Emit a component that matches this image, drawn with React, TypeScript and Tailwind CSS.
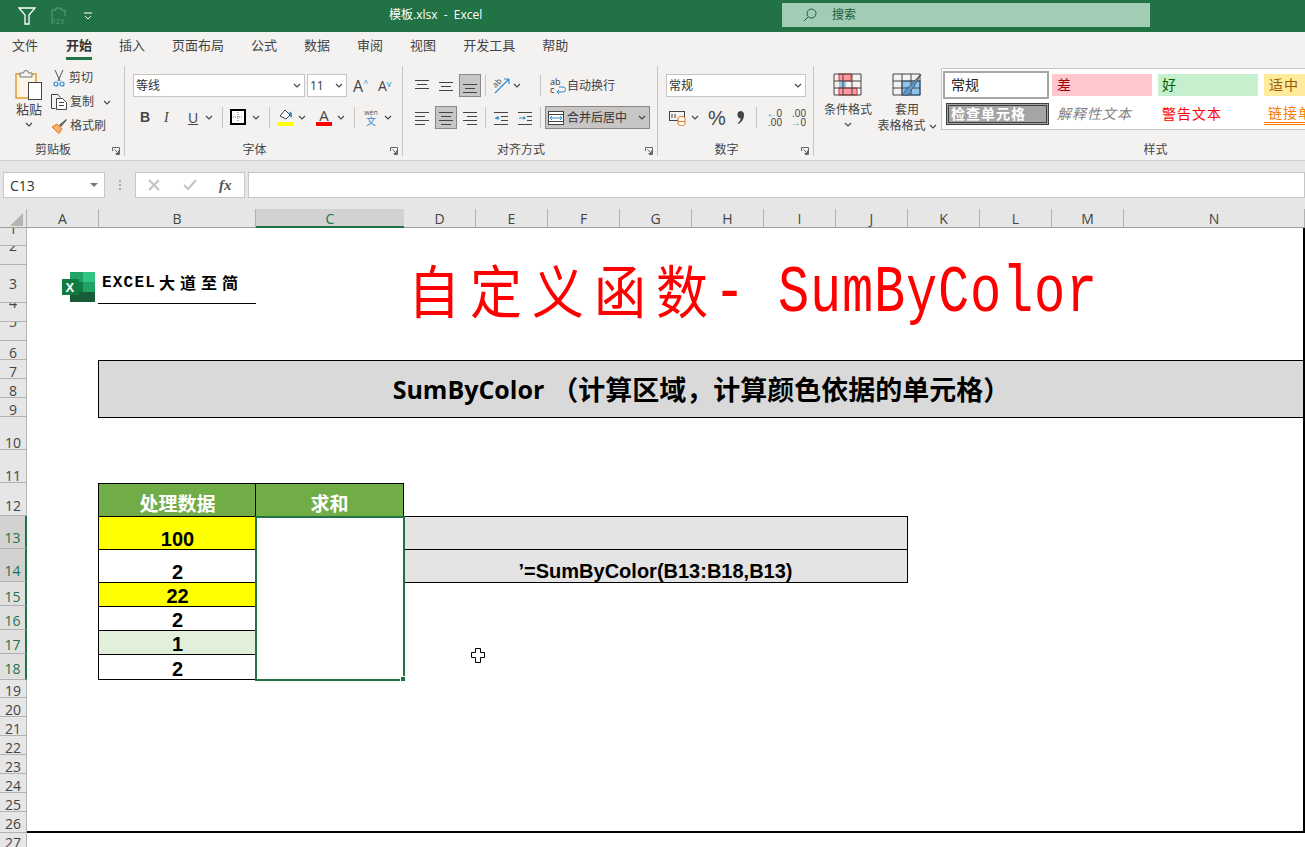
import type { ReactNode } from "react";

function Chevron({ className = "" }: { className?: string }) {
  return (
    <svg width="8" height="5" viewBox="0 0 8 5" className={className}>
      <path d="M1 1l3 3 3-3" fill="none" stroke="#444" strokeWidth="1.1" />
    </svg>
  );
}

function Launcher() {
  return (
    <svg width="8" height="8" viewBox="0 0 8 8" className="absolute right-[4px] bottom-[1px]">
      <path d="M.5 4V.5H7.5V7.5H4M2.5 2.5l4 4M6.5 3.5v3h-3" fill="none" stroke="#666" />
    </svg>
  );
}

function Lines({ rows, arrow }: { rows: number[][]; arrow?: "left" | "right" }) {
  return (
    <svg width="16" height="14" viewBox="0 0 16 14">
      {rows.map(([a, b, y]) => (
        <path key={y} d={`M${a} ${y + 0.5}H${b}`} stroke="#444" />
      ))}
      {arrow === "left" && <path d="M5.5 5v4L1.5 7zM2 6.5h4.5v1H2z" fill="#2a8dd4" />}
      {arrow === "right" && <path d="M2 6.5h4.5V5L9 7 6.5 9V7.5H2z" fill="#2a8dd4" />}
    </svg>
  );
}

function ToolBtn({ children, active = false }: { children: ReactNode; active?: boolean }) {
  return (
    <div
      className={
        active
          ? "mx-px flex h-[23px] w-[22px] items-center justify-center border border-[#8a8886] bg-[#c8c6c4]"
          : "mx-px flex h-[23px] w-[22px] items-center justify-center"
      }
    >
      {children}
    </div>
  );
}

function Sep({ className = "" }: { className?: string }) {
  return <div className={`h-[21px] w-px bg-[#c8c6c4] ${className}`} />;
}

function RibbonGroup({ label, className, children }: { label: string; className: string; children: ReactNode }) {
  return (
    <div className={`relative flex h-[90px] shrink-0 flex-col border-r border-[#c8c6c4] ${className}`}>
      {children}
      <div className="mt-auto -mb-[2px] pr-[18px] text-center text-[12px] leading-[16px] text-[#444]">{label}</div>
      <Launcher />
    </div>
  );
}

function Select({ text, className }: { text: string; className: string }) {
  return (
    <div className={`flex h-[23px] items-center justify-between border border-[#c6c6c6] bg-white pr-[3px] pl-[2px] text-[12px] text-[#333] ${className}`}>
      <span>{text}</span>
      <Chevron />
    </div>
  );
}

function TitleBar() {
  return (
    <div className="flex h-[32px] items-center bg-[#217346] text-white">
      <svg width="18" height="18" viewBox="0 0 18 18" className="ml-[18px]">
        <path d="M1 1h16l-6 7v9H7V8z" fill="none" stroke="#fff" strokeWidth="1.3" />
      </svg>
      <svg width="16" height="18" viewBox="0 0 16 18" className="ml-[15px] overflow-visible">
        <path d="M1 3h4V1h5v2h4v6M1 3v14" fill="none" stroke="#5f9f7d" />
        <text x="1" y="17" fontSize="7" fill="#5f9f7d">123</text>
      </svg>
      <svg width="8" height="8" viewBox="0 0 8 8" className="ml-[17px]">
        <path d="M0 1h8M1 4l3 3 3-3" fill="none" stroke="#fff" />
      </svg>
      <div className="ml-[297px] w-[100px] -translate-y-[1px] text-[12px] whitespace-pre">模板.xlsx  -  Excel</div>
      <div className="ml-[293px] flex h-[24px] w-[368px] -translate-y-[1px] items-center bg-[#a0cdb3] pl-[20px] text-[12px] text-[#1d5c3a]">
        <svg width="16" height="16" viewBox="0 0 16 16">
          <circle cx="9.5" cy="6.5" r="4.5" fill="none" stroke="#1d5c3a" />
          <path d="M6 10l-4 4" stroke="#1d5c3a" />
        </svg>
        <span className="ml-[14px]">搜索</span>
      </div>
    </div>
  );
}

function Tabs() {
  const tabs = ["文件", "开始", "插入", "页面布局", "公式", "数据", "审阅", "视图", "开发工具", "帮助"];
  return (
    <div className="flex h-[30px] gap-[27px] bg-[#f3f2f1] pl-[12px] text-[13px] text-[#444]">
      {tabs.map((t) => (
        <div
          key={t}
          className={
            t === "开始"
              ? "flex h-[28px] items-center border-b-[3px] border-[#217346] pt-[3px] font-bold text-[#333]"
              : t === "文件"
                ? "mr-px flex h-[28px] items-center"
                : "flex h-[28px] items-center"
          }
        >
          {t}
        </div>
      ))}
    </div>
  );
}

function ClipboardGroup() {
  return (
    <RibbonGroup label="剪贴板" className="w-[125px]">
      <div className="flex">
        <div className="ml-[14px] flex w-[30px] flex-col items-center pt-[3px]">
          <svg width="28" height="31" viewBox="0 0 28 31">
            <rect x="1" y="5" width="20" height="24" fill="#fdf6e8" stroke="#e69a2e" strokeWidth="1.5" />
            <path d="M5 8V4h3.5a2.5 2.5 0 0 1 5 0H17v4z" fill="#f3f2f1" stroke="#777" />
            <rect x="13.5" y="13.5" width="13" height="17" fill="#fff" stroke="#444" />
          </svg>
          <div className="mt-[1px] text-[13px] leading-[16px] whitespace-nowrap text-[#444]">粘贴</div>
          <Chevron className="mt-[5px]" />
        </div>
        <div className="ml-[7px] flex flex-col text-[12px] text-[#444]">
          <div className="flex h-[24px] items-center">
            <svg width="12" height="17" viewBox="0 0 12 17" className="ml-[2px]">
              <path d="M2 0l5 11M10 0L5 11" stroke="#555" />
              <circle cx="3" cy="14" r="2" fill="none" stroke="#2a8dd4" strokeWidth="1.2" />
              <circle cx="9" cy="14" r="2" fill="none" stroke="#2a8dd4" strokeWidth="1.2" />
            </svg>
            <span className="ml-[4px]">剪切</span>
          </div>
          <div className="flex h-[24px] items-center">
            <svg width="17" height="16" viewBox="0 0 17 16">
              <path d="M4.5 14.5h-4V.5H7l2.5 3" fill="none" stroke="#444" />
              <path d="M5.5 4.5h6l4 4v7h-10zM8 8.5h5M8 11.5h5" fill="#fff" stroke="#444" />
            </svg>
            <span className="ml-[2px]">复制</span>
            <Chevron className="ml-[9px]" />
          </div>
          <div className="flex h-[24px] items-center">
            <svg width="17" height="16" viewBox="0 0 17 16">
              <path d="M1 9l5-3 5 5-3 4.500z" fill="#f7b267" stroke="#e0791d" />
              <path d="M8 7l7-6 1 1-6 7z" fill="#666" />
            </svg>
            <span className="ml-[2px]">格式刷</span>
          </div>
        </div>
      </div>
    </RibbonGroup>
  );
}

function FontGroup() {
  return (
    <RibbonGroup label="字体" className="w-[278px] pt-[8px]">
      <div className="flex items-center pl-[8px]">
        <Select text="等线" className="w-[172px]" />
        <Select text="11" className="ml-[2px] w-[40px]" />
        <div className="ml-[6px] flex w-[25px] items-start text-[16px] leading-none text-[#444]">
          A<span className="text-[9px] text-[#2a8dd4]">^</span>
        </div>
        <div className="flex w-[20px] items-start text-[14px] leading-none text-[#444]">
          A<span className="text-[9px] text-[#2a8dd4]">v</span>
        </div>
      </div>
      <div className="mt-[8px] flex h-[24px] items-center text-[14px] text-[#444]">
        <span className="ml-[15px] w-[24px] font-['Liberation_Sans'] font-bold">B</span>
        <span className="w-[24px] font-['Liberation_Serif'] italic">I</span>
        <span className="w-[17px] underline">U</span>
        <Chevron />
        <Sep className="ml-[9px]" />
        <svg width="16" height="16" viewBox="0 0 16 16" className="ml-[7px]">
          <rect x="1" y="1" width="14" height="14" fill="#fff" stroke="#000" strokeWidth="2" />
          <path d="M8 3v10M3 8h10" stroke="#777" strokeDasharray="1 1" />
        </svg>
        <Chevron className="ml-[6px]" />
        <Sep className="ml-[9px]" />
        <div className="ml-[7px] flex w-[16px] flex-col items-center">
          <svg width="14" height="12" viewBox="0 0 14 12">
            <path d="M2 7l5-6 5 5-4 4z" fill="#fff" stroke="#444" />
            <path d="M12 3c1 2 1.500 3 1 5" fill="none" stroke="#2a8dd4" strokeWidth="2" />
          </svg>
          <div className="mt-[1px] h-[4px] w-[16px] bg-[#ffff00]" />
        </div>
        <Chevron className="ml-[5px]" />
        <div className="ml-[10px] flex w-[16px] flex-col items-center">
          <span className="text-[15px] leading-[12px] text-[#444]">A</span>
          <div className="mt-[1px] h-[4px] w-[16px] bg-[#ff0000]" />
        </div>
        <Chevron className="ml-[5px]" />
        <Sep className="ml-[9px]" />
        <div className="ml-[8px] flex w-[16px] flex-col items-center leading-none">
          <span className="text-[7px] text-[#555]">wén</span>
          <span className="text-[10px] text-[#2a8dd4]">文</span>
        </div>
        <Chevron className="ml-[5px]" />
      </div>
    </RibbonGroup>
  );
}

function AlignGroup() {
  return (
    <RibbonGroup label="对齐方式" className="w-[255px] pt-[8px]">
      <div className="flex items-center pl-[7px]">
        <ToolBtn><Lines rows={[[1, 15, 1], [3, 13, 5], [1, 15, 9]]} /></ToolBtn>
        <ToolBtn><Lines rows={[[1, 15, 3], [3, 13, 7], [1, 15, 11]]} /></ToolBtn>
        <ToolBtn active><Lines rows={[[1, 15, 5], [3, 13, 9], [1, 15, 13]]} /></ToolBtn>
        <Sep className="ml-[3px]" />
        <svg width="18" height="17" viewBox="0 0 18 17" className="ml-[7px] overflow-visible">
          <path d="M2 16L16 2M16 2h-5M16 2v5" fill="none" stroke="#2a8dd4" strokeWidth="1.2" />
          <text x="0" y="9" fontSize="8" fill="#444" transform="rotate(-45 4 7)">ab</text>
        </svg>
        <Chevron className="ml-[2px]" />
        <Sep className="ml-[19px]" />
        <div className="ml-[9px] flex items-center text-[12px] text-[#444]">
          <svg width="16" height="17" viewBox="0 0 16 17" className="overflow-visible">
            <text x="0" y="8" fontSize="9" fill="#333">ab</text>
            <text x="0" y="16" fontSize="9" fill="#333">c</text>
            <path d="M9 10h4a2 2 0 0 1 0 5H7M9 13l-2 2 2 2" fill="none" stroke="#2a8dd4" />
          </svg>
          <span className="ml-[1px]">自动换行</span>
        </div>
      </div>
      <div className="mt-[9px] flex items-center pl-[7px]">
        <ToolBtn><Lines rows={[[1, 15, 1], [1, 11, 5], [1, 15, 9], [1, 11, 13]]} /></ToolBtn>
        <ToolBtn active><Lines rows={[[1, 15, 1], [3, 13, 5], [1, 15, 9], [3, 13, 13]]} /></ToolBtn>
        <ToolBtn><Lines rows={[[1, 15, 1], [5, 15, 5], [1, 15, 9], [5, 15, 13]]} /></ToolBtn>
        <Sep className="ml-[3px]" />
        <div className="ml-[3px] flex">
          <ToolBtn><Lines arrow="left" rows={[[1, 15, 1], [8, 15, 5], [8, 15, 9], [1, 15, 13]]} /></ToolBtn>
          <ToolBtn><Lines arrow="right" rows={[[1, 15, 1], [10, 15, 5], [10, 15, 9], [1, 15, 13]]} /></ToolBtn>
        </div>
        <Sep className="ml-[3px]" />
        <div className="ml-[4px] flex h-[23px] w-[105px] items-center border border-[#8a8886] bg-[#c8c6c4] pl-[2px] text-[12px] text-[#333]">
          <svg width="16" height="14" viewBox="0 0 16 14">
            <rect x=".5" y=".5" width="15" height="13" fill="#fff" stroke="#444" />
            <path d="M.5 3.500h15M.5 10.500h15" stroke="#444" />
            <path d="M2 7h12M4 5L2 7l2 2M12 5l2 2-2 2" fill="none" stroke="#2a8dd4" />
          </svg>
          <span className="ml-[3px]">合并后居中</span>
          <Chevron className="ml-[11px]" />
        </div>
      </div>
    </RibbonGroup>
  );
}

function NumberGroup() {
  return (
    <RibbonGroup label="数字" className="w-[156px] pt-[8px]">
      <div className="pl-[8px]">
        <Select text="常规" className="w-[140px]" />
      </div>
      <div className="mt-[9px] flex h-[23px] items-center text-[#444]">
        <svg width="17" height="16" viewBox="0 0 17 16" className="ml-[11px]">
          <rect x=".5" y="1.500" width="15" height="9" fill="none" stroke="#444" />
          <path d="M3 4v4M6 4v4" stroke="#444" />
          <ellipse cx="12.500" cy="8" rx="3.500" ry="1.500" fill="#fff" stroke="#e0791d" />
          <path d="M9 8v6c0 2 7 2 7 0V8M9 11.500h7" fill="#fff" stroke="#e0791d" />
        </svg>
        <Chevron className="ml-[5px]" />
        <span className="ml-[9px] w-[23px] font-['Liberation_Sans'] text-[20px] leading-none">%</span>
        <svg width="8" height="14" viewBox="0 0 8 14" className="ml-[6px]">
          <path d="M3.500 0a3.500 3.500 0 0 1 3.500 4c0 4-2 7-5.500 9l-.8-1c2-1.500 3-3 3-4.500a3.500 3.500 0 0 1-3.200-4A3.500 3.500 0 0 1 3.500 0z" fill="#444" />
        </svg>
        <Sep className="ml-[11px]" />
        <div className="ml-[7px] flex w-[18px] flex-col font-['Liberation_Sans'] text-[10px] leading-[9px] whitespace-nowrap">
          <span className="text-right"><span className="text-[#2a8dd4]">←</span>0</span>
          <span className="text-right">.00</span>
        </div>
        <div className="ml-[6px] flex w-[18px] flex-col font-['Liberation_Sans'] text-[10px] leading-[9px] whitespace-nowrap">
          <span className="text-right">.00</span>
          <span className="text-right"><span className="text-[#2a8dd4]">→</span>0</span>
        </div>
      </div>
    </RibbonGroup>
  );
}

function GridIcon({ variant }: { variant: "cond" | "table" }) {
  return (
    <svg width="30" height="24" viewBox="0 0 30 24">
      {variant === "cond" ? (
        <>
          <rect x="6" y="1" width="12" height="7" fill="#ff9aa2" stroke="#d13438" />
          <rect x="6" y="8" width="7" height="7" fill="#8cc4ec" />
          <rect x="6" y="15" width="18" height="7" fill="#ff9aa2" stroke="#d13438" />
        </>
      ) : (
        <rect x="10" y="8" width="18" height="14" fill="#8cc4ec" stroke="#1a75bc" />
      )}
      <path d="M1 1h27v21H1zM1 8h27M1 15h27M10 1v21M19 1v21" fill="none" stroke="#444" />
      {variant === "table" && (
        <path d="M29 1L18 13l-2 2c-3 1-3 5-6 7 5 1 9-1 9-5l2-2z" fill="#5b9bd5" stroke="#555" />
      )}
    </svg>
  );
}

function StylesGroup() {
  return (
    <RibbonGroup label="样式" className="w-[702px]">
      <div className="flex">
        <div className="ml-[9px] flex w-[50px] flex-col items-center pt-[7px] text-[12px] leading-[16px] text-[#444]">
          <GridIcon variant="cond" />
          <span className="mt-[5px] whitespace-nowrap">条件格式</span>
          <Chevron className="mt-[4px]" />
        </div>
        <div className="ml-[3px] flex w-[62px] flex-col items-center pt-[7px] text-[12px] leading-[16px] text-[#444]">
          <GridIcon variant="table" />
          <span className="mt-[5px]">套用</span>
          <span className="flex items-center gap-[3px] whitespace-nowrap">表格格式<Chevron /></span>
        </div>
        <div className="mt-[2px] ml-[3px] grid h-[62px] w-[500px] grid-cols-[109px_106px_106px_106px] grid-rows-[31px_27px] items-center border border-[#c8c6c4] bg-white pl-[1px] text-[14px]">
          <div className="mr-[3px] flex h-[28px] items-center border-2 border-[#a6a6a6] bg-white pl-[6px] text-[#222]">常规</div>
          <div className="mr-[6px] flex h-[22px] items-center bg-[#ffc7ce] pl-[5px] text-[#9c0006]">差</div>
          <div className="mr-[6px] flex h-[22px] items-center bg-[#c6efce] pl-[4px] text-[#006100]">好</div>
          <div className="mr-[6px] flex h-[22px] items-center bg-[#ffeb9c] pl-[5px] tracking-[1px] text-[#9c5700]">适中</div>
          <div className="mx-[3px] flex h-[22px] items-center border-[3px] border-double border-[#3f3f3f] bg-[#a5a5a5] pl-[2px] tracking-[1px] font-bold whitespace-nowrap text-white">检查单元格</div>
          <div className="flex h-[22px] items-center pl-[5px] tracking-[1px] whitespace-nowrap text-[#7f7f7f] italic">解释性文本</div>
          <div className="flex h-[22px] items-center pl-[4px] tracking-[1px] whitespace-nowrap text-[#ff0000]">警告文本</div>
          <div className="flex h-[22px] items-center border-b-[3px] border-double border-[#fa7d00] pl-[4px] tracking-[1px] whitespace-nowrap text-[#fa7d00]">链接单元格</div>
        </div>
      </div>
    </RibbonGroup>
  );
}

function FormulaBar() {
  return (
    <div className="flex h-[49px] items-start border-t border-[#d2d0ce] bg-[#e6e6e6] pt-[11px]">
      <div className="ml-[3px] flex h-[26px] w-[102px] items-center justify-between border border-[#c6c6c6] bg-white pr-[6px] pl-[6px] text-[14px] text-[#333]">
        C13
        <div className="h-0 w-0 border-x-[4px] border-t-[4px] border-x-transparent border-t-[#777]" />
      </div>
      <div className="ml-[14px] flex h-[26px] flex-col items-center justify-center gap-[2px]">
        <div className="h-[2px] w-[2px] bg-[#aaa]" />
        <div className="h-[2px] w-[2px] bg-[#aaa]" />
        <div className="h-[2px] w-[2px] bg-[#aaa]" />
      </div>
      <div className="ml-[14px] flex h-[26px] w-[110px] items-center border border-[#c6c6c6] bg-white">
        <svg width="12" height="12" viewBox="0 0 12 12" className="ml-[12px]">
          <path d="M1 1l10 10M11 1L1 11" stroke="#c4c4c4" strokeWidth="2" />
        </svg>
        <svg width="14" height="12" viewBox="0 0 14 12" className="ml-[23px]">
          <path d="M1 6l4 4 8-9" fill="none" stroke="#c4c4c4" strokeWidth="2" />
        </svg>
        <span className="ml-[22px] font-['Liberation_Serif'] text-[15px] font-bold text-[#555] italic">fx</span>
      </div>
      <div className="ml-[3px] h-[26px] flex-1 border border-[#c6c6c6] bg-white" />
    </div>
  );
}

const columns = [
  { name: "A", width: "w-[72px]" },
  { name: "B", width: "w-[157px]" },
  { name: "C", width: "w-[148px]" },
  { name: "D", width: "w-[72px]" },
  { name: "E", width: "w-[72px]" },
  { name: "F", width: "w-[72px]" },
  { name: "G", width: "w-[72px]" },
  { name: "H", width: "w-[72px]" },
  { name: "I", width: "w-[72px]" },
  { name: "J", width: "w-[72px]" },
  { name: "K", width: "w-[72px]" },
  { name: "L", width: "w-[72px]" },
  { name: "M", width: "w-[72px]" },
  { name: "N", width: "w-[181px]" },
];

function ColumnHeaders() {
  return (
    <div className="flex h-[19px] border-b border-[#9f9f9f] bg-[#e6e6e6] text-[14px] leading-[20px] text-[#444]">
      <div className="flex h-[18px] w-[27px] items-end justify-end border-r border-[#b1b1b1] pr-[3px] pb-[1px]">
        <div className="h-0 w-0 border-b-[13px] border-l-[13px] border-b-[#b4b4b4] border-l-transparent" />
      </div>
      {columns.map((c) => (
        <div
          key={c.name}
          className={
            c.name === "C"
              ? `${c.width} h-[19px] border-b-2 border-[#217346] bg-[#d2d2d2] text-center text-[#217346]`
              : `${c.width} h-[18px] border-r border-[#b1b1b1] text-center`
          }
        >
          {c.name}
        </div>
      ))}
    </div>
  );
}

// clipped labels sit high in their row, like the capture
const rows = [
  { n: 1, cls: "h-[18px] items-start [&>span]:-mt-[8px]" },
  { n: 2, cls: "h-[19px] items-start [&>span]:-mt-[9px]" },
  { n: 3, cls: "h-[38px] items-center" },
  { n: 4, cls: "h-[19px] items-start [&>span]:-mt-[9px]" },
  { n: 5, cls: "h-[19px] items-start [&>span]:-mt-[9px]" },
  { n: 6, cls: "h-[19px] items-end [&>span]:leading-[13px]" },
  { n: 7, cls: "h-[19px] items-end [&>span]:leading-[13px]" },
  { n: 8, cls: "h-[19px] items-end [&>span]:leading-[13px]" },
  { n: 9, cls: "h-[19px] items-end [&>span]:leading-[13px]" },
  { n: 10, cls: "h-[33px] items-end [&>span]:leading-[13px]" },
  { n: 11, cls: "h-[33px] items-end [&>span]:leading-[13px]" },
  { n: 12, cls: "h-[33px] items-end pb-px" },
  { n: 13, cls: "h-[33px] items-end pb-[2px] bg-[#d2d2d2] text-[#217346] border-r-2 border-r-[#217346]" },
  { n: 14, cls: "h-[33px] items-end pb-[2px] bg-[#d2d2d2] text-[#217346] border-r-2 border-r-[#217346]" },
  { n: 15, cls: "h-[24px] items-end bg-[#e0e0e0] text-[#217346] border-r-2 border-r-[#217346]" },
  { n: 16, cls: "h-[24px] items-end bg-[#e0e0e0] text-[#217346] border-r-2 border-r-[#217346]" },
  { n: 17, cls: "h-[24px] items-end bg-[#e0e0e0] text-[#217346] border-r-2 border-r-[#217346]" },
  { n: 18, cls: "h-[26px] items-end pb-[2px] bg-[#e0e0e0] text-[#217346] border-r-2 border-r-[#217346]" },
  { n: 19, cls: "h-[18px] items-end [&>span]:leading-[13px]" },
  { n: 20, cls: "h-[19px] items-end [&>span]:leading-[13px]" },
  { n: 21, cls: "h-[19px] items-end [&>span]:leading-[13px]" },
  { n: 22, cls: "h-[19px] items-end [&>span]:leading-[13px]" },
  { n: 23, cls: "h-[19px] items-end [&>span]:leading-[13px]" },
  { n: 24, cls: "h-[19px] items-end [&>span]:leading-[13px]" },
  { n: 25, cls: "h-[19px] items-end [&>span]:leading-[13px]" },
  { n: 26, cls: "h-[21px] items-end" },
  { n: 27, cls: "h-[19px] items-end" },
];

function RowHeaders() {
  return (
    <div className="w-[27px] shrink-0 bg-[#e6e6e6] text-[14px] leading-[17px] text-[#444]">
      {rows.map((r) => (
        <div
          key={r.n}
          className={`flex justify-center overflow-hidden border-r border-b border-[#b1b1b1] ${r.cls}`}
        >
          <span>{r.n}</span>
        </div>
      ))}
    </div>
  );
}

const dataCell = "flex items-end justify-center border-t border-l border-black font-['Liberation_Sans'] text-[20px] leading-[20px] font-bold text-black";
const headCell = "flex items-end justify-center border-t border-l border-black bg-[#70ad47] text-[19px] leading-[23px] font-bold text-white";

function Sheet() {
  return (
    <div className="relative grid h-[619px] w-[1278px] grid-cols-[71px_158px_148px_repeat(10,72px)_181px] grid-rows-[18px_19px_38px_19px_19px_19px_19px_19px_19px_33px_33px_33px_33px_33px_24px_24px_24px_26px_18px_19px_19px_19px_19px_19px_19px_21px_19px] bg-white">
      <div className="col-start-1 row-start-3 flex items-start justify-end pt-[7px] pr-[3px]">
        <svg width="33" height="30" viewBox="0 0 33 30">
          <rect x="8" width="25" height="10" fill="#33c481" />
          <rect x="8" width="13" height="10" fill="#21a366" />
          <rect x="8" y="10" width="13" height="10" fill="#107c41" />
          <rect x="21" y="10" width="12" height="10" fill="#21a366" />
          <rect x="8" y="20" width="25" height="10" fill="#185c37" />
          <rect y="7" width="17" height="16" fill="#107c41" />
          <text x="3.500" y="20" fontSize="13" fontWeight="700" fill="#fff" fontFamily="Liberation Sans">X</text>
        </svg>
      </div>
      <div className="col-start-2 row-start-3 -mb-px flex items-start border-b border-black pt-[7px] pl-[4px] text-[16px] leading-[22px] font-bold text-black">
        <span className="font-['Liberation_Mono'] tracking-[1.200px]">EXCEL</span>
        <span className="ml-[3px] tracking-[5px]">大道至简</span>
      </div>

      <div className="col-start-3 col-span-12 row-start-2 row-span-3 flex items-center pt-[14px] pl-[152px] whitespace-nowrap text-[#ff0000]">
        <span className="inline-block origin-center scale-y-110 text-[52px] leading-none tracking-[10px]">自定义函数</span>
        <span className="mt-[6px] -ml-[4px] inline-block origin-center scale-y-[1.3] font-['Liberation_Mono'] text-[52px] leading-none tracking-[0.800px] whitespace-pre">- SumByColor</span>
      </div>

      <div className="col-start-2 col-span-13 row-start-7 row-span-3 flex h-[58px] items-center justify-center border border-black bg-[#d9d9d9] pt-[2px] text-[27px] font-bold whitespace-nowrap text-black">
        <span className="text-[25px]">SumByColor</span>&nbsp;（计算区域，计算颜色依据的单元格）
      </div>

      <div className={`col-start-2 row-start-12 ${headCell}`}>处理数据</div>
      <div className={`col-start-3 row-start-12 -ml-px border-r ${headCell}`}>求和</div>

      <div className={`col-start-2 row-start-13 bg-[#ffff00] ${dataCell}`}>100</div>
      <div className={`col-start-2 row-start-14 ${dataCell}`}>2</div>
      <div className={`col-start-2 row-start-15 bg-[#ffff00] ${dataCell}`}>22</div>
      <div className={`col-start-2 row-start-16 ${dataCell}`}>2</div>
      <div className={`col-start-2 row-start-17 bg-[#e2efda] ${dataCell}`}>1</div>
      <div className={`col-start-2 row-start-18 border-b ${dataCell}`}>2</div>

      <div className="col-start-4 col-span-7 row-start-13 border-t border-r border-black bg-[#e4e4e4]" />
      <div className="col-start-4 col-span-7 row-start-14 flex h-[34px] items-start justify-center border-y border-r border-black bg-[#e4e4e4] pt-[10px] font-['Liberation_Sans'] text-[20px] leading-[22px] font-bold text-black">
        ’=SumByColor(B13:B18,B13)
      </div>

      <div className="relative col-start-3 row-start-13 row-end-19 -mr-px -mb-px -ml-px border-2 border-[#217346] bg-white">
        <div className="absolute -right-[3px] -bottom-[3px] h-[6px] w-[6px] border border-white bg-[#217346]" />
      </div>

      <div className="pointer-events-none col-start-1 col-span-14 row-start-1 row-end-27 border-r-2 border-b-2 border-black" />

      <svg width="14" height="15" viewBox="0 0 14 15" className="absolute top-[420px] left-[444px]">
        <path d="M4.500.5h5v4h4v5h-4v5h-5v-5h-4v-5h4z" fill="#fff" stroke="#000" />
      </svg>
    </div>
  );
}

export default function App() {
  return (
    <div className="h-[847px] w-[1305px] overflow-hidden bg-white font-['Open_Sans','Noto_Sans_CJK_SC',sans-serif]">
      <TitleBar />
      <Tabs />
      <div className="flex h-[98px] bg-[#f3f2f1] pt-[4px]">
        <ClipboardGroup />
        <FontGroup />
        <AlignGroup />
        <NumberGroup />
        <StylesGroup />
      </div>
      <FormulaBar />
      <ColumnHeaders />
      <div className="flex">
        <RowHeaders />
        <Sheet />
      </div>
    </div>
  );
}
